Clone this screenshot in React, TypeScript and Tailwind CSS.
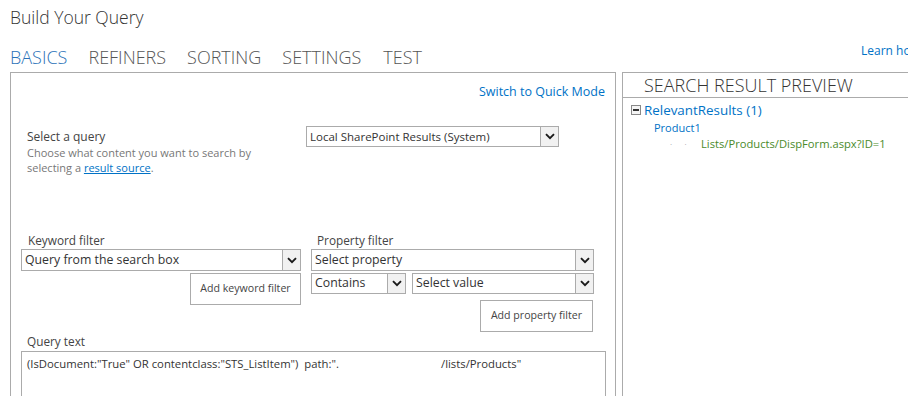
function Chevron() {
  return (
    <svg width="10" height="7" viewBox="0 0 10 7">
      <path d="M1 1.2 L5 5.2 L9 1.2" fill="none" stroke="#1a1a1a" strokeWidth="1.9" />
    </svg>
  );
}

function Dropdown({ value, className, text = 'text-[11.5px]' }: { value: string; className: string; text?: string }) {
  return (
    <div className={`flex items-stretch border border-[#ababab] bg-white ${className}`}>
      <span className={`flex-1 flex items-center px-[3px] whitespace-nowrap overflow-hidden text-[#333] ${text}`}>{value}</span>
      <span className="w-[18px] border-l border-[#ababab] bg-[#f1f1f1] flex items-center justify-center">
        <Chevron />
      </span>
    </div>
  );
}

function Button({ label, className }: { label: string; className: string }) {
  return (
    <div className={`flex items-center justify-center border border-[#ababab] bg-white text-[10.6px] text-[#444] ${className}`}>
      {label}
    </div>
  );
}

export default function App() {
  return (
    <div className="w-[908px] h-[396px] overflow-hidden bg-white text-[#444] font-['Segoe_UI','Open_Sans',sans-serif]">
      <div className="pl-[10px] pt-[5px] text-[17.5px] leading-[24px] font-light text-[#333]">Build Your Query</div>

      <div className="flex items-start pl-[10px] mt-[16px] h-[24px] text-[18px] leading-[24px] font-light">
        <span className="text-[#2a72b8]">BASICS</span>
        <span className="ml-[21px] text-[#555]">REFINERS</span>
        <span className="ml-[21px] text-[#555]">SORTING</span>
        <span className="ml-[21px] text-[#555]">SETTINGS</span>
        <span className="ml-[22px] text-[#555]">TEST</span>
        <span className="ml-auto w-[47px] whitespace-nowrap text-[12px] leading-[16px] -mt-[2px] font-normal text-[#0072c6]">Learn how to build a query</span>
      </div>

      <div className="flex ml-[10px] mt-[3px] gap-[6px]">
        {/* left: query builder */}
        <div className="w-[606px] h-[330px] shrink-0 border-l border-t border-r border-[#ababab]">
          <div className="flex justify-end pr-[10px] pt-[10px] text-[12.5px] leading-[17px] text-[#0072c6]">
            Switch to Quick Mode
          </div>

          <div className="flex mt-[26px] pl-[16px]">
            <div className="w-[279px] pt-[2px]">
              <div className="text-[12px] leading-[17px] text-[#444]">Select a query</div>
              <div className="text-[11px] leading-[15px] text-[#777]">
                Choose what content you want to search by
                <br />
                selecting a <span className="text-[#0072c6] underline">result source</span>.
              </div>
            </div>
            <Dropdown value="Local SharePoint Results (System)" className="w-[253px] h-[21px]" />
          </div>

          <div className="flex mt-[57px] pl-[10px] gap-[10px]">
            <div className="w-[280px] flex flex-col">
              <div className="pl-[7px] text-[11.8px] leading-[16px] text-[#444]">Keyword filter</div>
              <Dropdown value="Query from the search box" className="mt-[1px] h-[22px]" text="text-[12.3px]" />
              <Button label="Add keyword filter" className="mt-[2px] self-end w-[111px] h-[32px]" />
            </div>
            <div className="w-[283px] flex flex-col">
              <div className="pl-[6px] text-[11.8px] leading-[16px] text-[#444]">Property filter</div>
              <Dropdown value="Select property" className="mt-[1px] h-[22px]" text="text-[12.3px]" />
              <div className="flex mt-[2px] gap-[6px]">
                <Dropdown value="Contains" className="w-[95px] h-[21px]" text="text-[12.3px]" />
                <Dropdown value="Select value" className="flex-1 h-[21px]" text="text-[12.3px]" />
              </div>
              <Button label="Add property filter" className="mt-[6px] self-end mr-[1px] w-[113px] h-[32px]" />
            </div>
          </div>

          <div className="pl-[16px] mt-[1px] text-[11.8px] leading-[16px] text-[#444]">Query text</div>
          <div className="ml-[10px] mt-[2px] w-[585px] h-[60px] border border-[#ababab] pl-[5px] pt-[4px] text-[11.3px] leading-[16px] text-[#333] whitespace-nowrap">
            <span className="inline-block w-[414px]">(IsDocument:"True" OR contentclass:"STS_ListItem")&nbsp;&nbsp;path:".</span>
            /lists/Products"
          </div>
        </div>

        {/* right: preview */}
        <div className="flex-1 h-[330px] border-l border-t border-[#ababab]">
          <div className="h-[25px] border-b border-[#ababab] pl-[21px] text-[18px] leading-[24px] font-light text-[#333]">
            SEARCH RESULT PREVIEW
          </div>
          <div className="flex items-center pl-[8px] mt-[2px] h-[20px]">
            <span className="w-[10px] h-[10px] border border-[#888] bg-[#f4f4f4] flex items-center justify-center">
              <span className="w-[6px] h-[1.5px] bg-[#333]" />
            </span>
            <span className="ml-[3px] text-[13.4px] leading-[20px] text-[#0072c6]">RelevantResults (1)</span>
          </div>
          <div className="pl-[31px] text-[11px] leading-[16px] text-[#0072c6]">Product1</div>
          <div className="flex pl-[47px] text-[11.2px] leading-[16px]">
            <span className="w-[31px] text-[#999] text-[8px]">·&nbsp;&nbsp;&nbsp;&nbsp;&nbsp;&nbsp;·</span>
            <span className="text-[#4a8a2a]">Lists/Products/DispForm.aspx?ID=1</span>
          </div>
        </div>
      </div>
    </div>
  );
}
